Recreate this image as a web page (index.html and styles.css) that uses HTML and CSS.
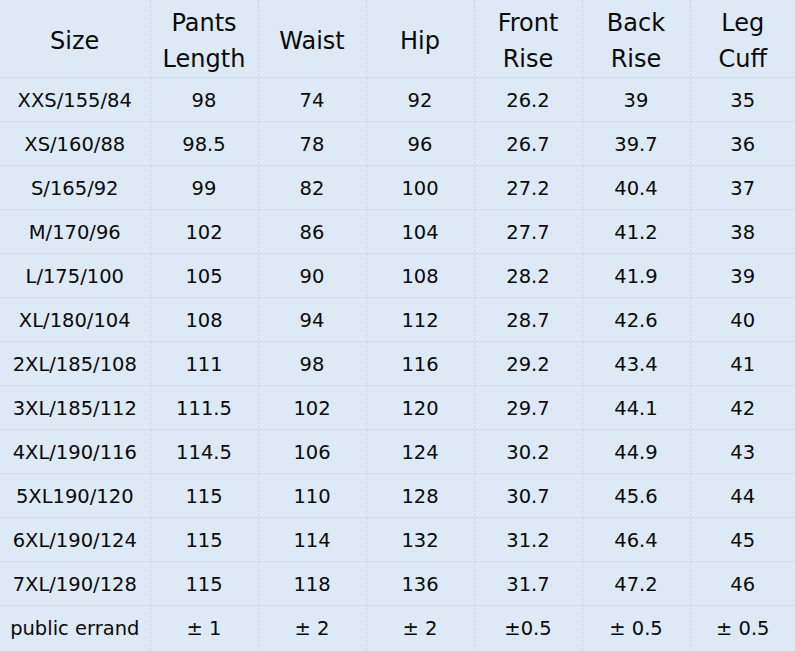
FILE: index.html
```html
<!DOCTYPE html>
<html>
<head>
<meta charset="utf-8">
<link rel="stylesheet" href="styles.css">
</head>
<body>
<table class="chart">
  <colgroup>
    <col class="c-size"><col class="c-num"><col class="c-num"><col class="c-num"><col class="c-num"><col class="c-num"><col class="c-last">
  </colgroup>
  <thead>
    <tr class="head">
      <th>Size</th><th>Pants<br>Length</th><th>Waist</th><th>Hip</th><th>Front<br>Rise</th><th>Back<br>Rise</th><th>Leg<br>Cuff</th>
    </tr>
  </thead>
  <tbody>
    <tr><td>XXS/155/84</td><td>98</td><td>74</td><td>92</td><td>26.2</td><td>39</td><td>35</td></tr>
    <tr><td>XS/160/88</td><td>98.5</td><td>78</td><td>96</td><td>26.7</td><td>39.7</td><td>36</td></tr>
    <tr><td>S/165/92</td><td>99</td><td>82</td><td>100</td><td>27.2</td><td>40.4</td><td>37</td></tr>
    <tr><td>M/170/96</td><td>102</td><td>86</td><td>104</td><td>27.7</td><td>41.2</td><td>38</td></tr>
    <tr><td>L/175/100</td><td>105</td><td>90</td><td>108</td><td>28.2</td><td>41.9</td><td>39</td></tr>
    <tr><td>XL/180/104</td><td>108</td><td>94</td><td>112</td><td>28.7</td><td>42.6</td><td>40</td></tr>
    <tr><td>2XL/185/108</td><td>111</td><td>98</td><td>116</td><td>29.2</td><td>43.4</td><td>41</td></tr>
    <tr><td>3XL/185/112</td><td>111.5</td><td>102</td><td>120</td><td>29.7</td><td>44.1</td><td>42</td></tr>
    <tr><td>4XL/190/116</td><td>114.5</td><td>106</td><td>124</td><td>30.2</td><td>44.9</td><td>43</td></tr>
    <tr><td>5XL190/120</td><td>115</td><td>110</td><td>128</td><td>30.7</td><td>45.6</td><td>44</td></tr>
    <tr><td>6XL/190/124</td><td>115</td><td>114</td><td>132</td><td>31.2</td><td>46.4</td><td>45</td></tr>
    <tr><td>7XL/190/128</td><td>115</td><td>118</td><td>136</td><td>31.7</td><td>47.2</td><td>46</td></tr>
    <tr><td>public errand</td><td>± 1</td><td>± 2</td><td>± 2</td><td>±0.5</td><td>± 0.5</td><td>± 0.5</td></tr>
  </tbody>
</table>
</body>
</html>
```
FILE: styles.css
```css
html, body {
  margin: 0;
  padding: 0;
  background: #dde9f5;
}
.chart {
  width: 795px;
  border-collapse: collapse;
  table-layout: fixed;
  font-family: "DejaVu Sans", Verdana, sans-serif;
  color: #0a0a0a;
  background: #dde9f5;
}
.c-size { width: 150px; }
.c-num { width: 108px; }
.c-last { width: 105px; }
.chart th, .chart td {
  padding: 0;
  text-align: center;
  vertical-align: middle;
  border-right: 1px dotted #c3d3e6;
  border-bottom: 1px dotted #c3d3e6;
}
.chart th:last-child, .chart td:last-child {
  border-right: none;
}
.chart tbody tr:last-child td {
  border-bottom: none;
}
.chart th {
  height: 73px;
  padding-top: 4px;
  font-weight: normal;
  font-size: 24px;
  line-height: 36px;
}
.chart td {
  height: 40px;
  padding-top: 3px;
  font-size: 19.5px;
  line-height: 24px;
}
```
